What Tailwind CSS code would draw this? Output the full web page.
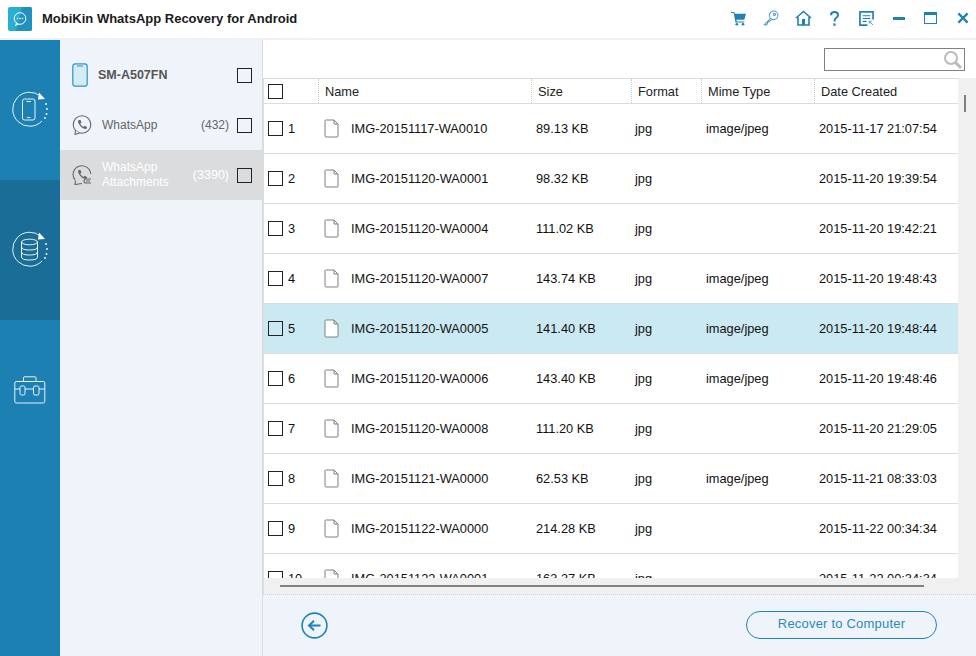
<!DOCTYPE html>
<html lang="en">
<head>
<meta charset="UTF-8">
<title>MobiKin WhatsApp Recovery for Android</title>
<script src="https://cdn.jsdelivr.net/npm/@tailwindcss/browser@4"></script>
</head>
<body class="w-[976px] h-[656px] overflow-hidden bg-white font-['Liberation_Sans',Arial,sans-serif] text-[12px] text-[#111]">
<svg class="hidden">
  <symbol id="file" viewBox="0 0 15 19"><path d="M1.5 1 H10 L14 5 V17 Q14 18 13 18 H2 Q1 18 1 17 V1.5 Z M10 1 V5 H14" fill="#fff" stroke="#808080" stroke-width="1"/></symbol>
</svg>

<!-- title bar -->
<header class="h-[40px] flex items-center border-b-2 border-[#f0f0f0] bg-white">
  <svg class="ml-[8px] w-[24px] h-[24px]" viewBox="0 0 24 24">
    <rect width="24" height="24" rx="2" fill="#29aed0"/>
    <path d="M14 0 H22 Q24 0 24 2 V22 Q24 24 22 24 H8 Z" fill="#2190bd"/>
    <circle cx="12" cy="11.5" r="5.8" fill="none" stroke="#fff" stroke-width="1"/>
    <path d="M8 16 L7 19 L11 17.2" fill="#fff"/>
    <circle cx="9.5" cy="11.5" r=".8" fill="#fff"/><circle cx="12" cy="11.5" r=".8" fill="#fff"/><circle cx="14.5" cy="11.5" r=".8" fill="#fff"/>
  </svg>
  <h1 class="ml-[10px] text-[13px] font-bold text-[#1a1a1a]">MobiKin WhatsApp Recovery for Android</h1>
  <div class="ml-auto mr-[7px] pb-[2px] flex items-center h-full">
    <svg class="w-[16px] h-[15px] mr-[16px]" viewBox="0 0 18 17" fill="#2082b3"><path d="M0 1 H3.5 L4.5 3 H17 L15 10 H6 L6.5 12 H15 V13 H5 L3 2.2 H0 Z"/><circle cx="6.5" cy="15" r="1.5"/><circle cx="13.5" cy="15" r="1.5"/></svg>
    <svg class="w-[16px] h-[16px] mr-[16px]" viewBox="0 0 18 18" fill="none" stroke="#4f9fc6" stroke-width="1.2"><circle cx="12" cy="6" r="4.8"/><circle cx="13" cy="5" r="1.2"/><path d="M8.5 9.5 L1.5 16.5 L3.5 17 L5 15.5 L5.5 13.5 L7 13 L10 10.5"/></svg>
    <svg class="w-[17px] h-[16px] mr-[18px]" viewBox="0 0 17 16" fill="none" stroke="#2082b3" stroke-width="1.6"><path d="M1 8 L8.5 1.5 L16 8"/><path d="M3 7 V15 H14 V7"/><rect x="7" y="9" width="3" height="6" fill="#2082b3" stroke="none"/></svg>
    <svg class="w-[9px] h-[15px] mr-[20px]" viewBox="0 0 9 15" fill="none" stroke="#2082b3" stroke-width="2"><path d="M1 4.2 Q1 1 4.5 1 Q8 1 8 4 Q8 5.8 6 7 Q4.5 8 4.5 10.5"/><rect x="3.4" y="12.4" width="2.2" height="2.4" fill="#2082b3" stroke="none"/></svg>
    <svg class="w-[15px] h-[15px] mr-[19px]" viewBox="0 0 16 16" fill="none" stroke="#2082b3"><path d="M15 9 V1 H1 V15 H9" stroke-width="1.8"/><path d="M4 5 H12 M4 8 H12 M4 11 H8" stroke-width="1.2"/><path d="M11 11 L15 15 M11 11 H13.5 M11 11 V13.5" stroke-width="1" stroke="#4f9fc6"/></svg>
    <div class="w-[12px] h-[3px] mr-[19px] bg-[#2082b3]"></div>
    <div class="w-[13px] h-[12px] mr-[20px] border border-[#2082b3] border-t-[3px]"></div>
    <svg class="w-[12px] h-[12px]" viewBox="0 0 13 13" stroke="#2082b3" stroke-width="2.4"><path d="M1.5 1.5 L11.5 11.5 M11.5 1.5 L1.5 11.5"/></svg>
  </div>
</header>

<div class="flex h-[616px]">
  <!-- icon rail -->
  <nav class="w-[60px] shrink-0 bg-[#1c80b2] flex flex-col">
    <div class="h-[140px] flex pt-[51px] justify-center">
      <svg class="w-[36px] h-[36px]" viewBox="0 0 36 36" fill="none" stroke="#fff">
        <path d="M29 5.5 A17 17 0 1 0 30 30" stroke-width=".9"/>
        <path d="M27 1.5 L33 8 L26 8.5 Z" fill="#fff" stroke="none"/>
        <circle cx="34" cy="13" r=".9" fill="#fff" stroke="none"/><circle cx="35" cy="18" r=".9" fill="#fff" stroke="none"/><circle cx="34.5" cy="23" r=".9" fill="#fff" stroke="none"/><circle cx="33" cy="27" r=".9" fill="#fff" stroke="none"/>
        <rect x="10.5" y="8" width="12.5" height="21" rx="2" stroke-width=".9"/>
        <path d="M14.5 10.5 H19 M15 26.5 H18.5" stroke-width=".9"/>
      </svg>
    </div>
    <div class="h-[140px] bg-[#1a6d97] flex pt-[51px] justify-center">
      <svg class="w-[36px] h-[36px]" viewBox="0 0 36 36" fill="none" stroke="#fff">
        <path d="M29 5.5 A17 17 0 1 0 30 30" stroke-width=".9"/>
        <path d="M27 1.5 L33 8 L26 8.5 Z" fill="#fff" stroke="none"/>
        <circle cx="34" cy="13" r=".9" fill="#fff" stroke="none"/><circle cx="35" cy="18" r=".9" fill="#fff" stroke="none"/><circle cx="34.5" cy="23" r=".9" fill="#fff" stroke="none"/><circle cx="33" cy="27" r=".9" fill="#fff" stroke="none"/>
        <ellipse cx="17.5" cy="11" rx="8" ry="2.8" stroke-width=".9"/>
        <path d="M9.5 11 V26 Q9.5 29 17.5 29 Q25.5 29 25.5 26 V11 M9.5 16 Q9.5 19 17.5 19 Q25.5 19 25.5 16 M9.5 21 Q9.5 24 17.5 24 Q25.5 24 25.5 21" stroke-width=".9"/>
      </svg>
    </div>
    <div class="flex pt-[56px] justify-center">
      <svg class="w-[32px] h-[28px]" viewBox="0 0 32 28" fill="none" stroke="#fff" stroke-width=".9">
        <rect x=".8" y="5.5" width="30" height="21.5" rx="1.5"/>
        <path d="M9.5 5.5 V1.8 Q9.5 .8 10.5 .8 H21 Q22 .8 22 1.8 V5.5"/>
        <path d="M.8 13 H6 M11 13 H19.5 M25 13 H30.8"/>
        <rect x="6" y="10" width="5" height="9" rx="1.5"/><rect x="19.5" y="10" width="5.5" height="9" rx="1.5"/>
      </svg>
    </div>
  </nav>

  <!-- device tree -->
  <aside class="w-[203px] shrink-0 bg-[#eff4fb] border-r border-[#dcdcdc]">
    <div class="h-[60px] flex items-center pl-[12px] pt-[10px]">
      <svg class="w-[16px] h-[24px]" viewBox="0 0 16 24"><rect x=".8" y=".8" width="14.4" height="22.4" rx="2.5" fill="#d3ecf7" stroke="#2f95c4" stroke-width="1.2"/><path d="M5 3 H11" stroke="#2f95c4"/></svg>
      <span class="ml-[10px] text-[12.5px] font-bold text-[#555]">SM-A507FN</span>
      <span class="ml-auto mr-[10px] w-[15px] h-[15px] border border-[#222]"></span>
    </div>
    <div class="h-[50px] flex items-center pl-[12px]">
      <svg class="w-[20px] h-[20px]" viewBox="0 0 20 20" fill="none" stroke="#666" stroke-width="1.1"><circle cx="10" cy="9.5" r="8.8"/><path d="M3.5 15.5 L3 19.5 L7.5 18" fill="#eff4fb"/><path d="M6.5 5 L8.5 5 L9.5 7.5 L8.2 8.8 Q9.5 11 11.5 12 L12.8 10.8 L15 12 L14.5 14 Q9 14.5 6 7 Z" fill="#666" stroke="none"/></svg>
      <span class="ml-[10px] text-[#666]">WhatsApp</span>
      <span class="ml-auto mr-[8px] text-[#666]">(432)</span>
      <span class="mr-[10px] w-[15px] h-[15px] border border-[#222]"></span>
    </div>
    <div class="h-[50px] flex items-center pl-[12px] bg-[#dbdcdd]">
      <svg class="w-[20px] h-[20px]" viewBox="0 0 20 20" fill="none" stroke="#666" stroke-width="1.1"><path d="M3 15 A8.8 8.8 0 1 1 18.7 9"/><path d="M3.5 15.5 L3 19.5 L10 18.5"/><path d="M6.5 5 L8.5 5 L9.5 7.5 L8.2 8.8 Q9.5 11 11.5 12 L12.8 10.8 L15 12 L14.5 14 Q9 14.5 6 7 Z" fill="#666" stroke="none"/><path d="M19 14 H14 A2 2 0 0 0 14 18 H19 M18 16 H14" /></svg>
      <span class="ml-[10px] text-white leading-[15px]">WhatsApp<br>Attachments</span>
      <span class="ml-auto mr-[8px] text-[12.5px] text-white">(3390)</span>
      <span class="mr-[10px] w-[15px] h-[15px] border border-[#222]"></span>
    </div>
  </aside>

  <!-- file list -->
  <main class="flex-1 min-w-0 flex flex-col bg-white text-[12.8px]">
    <div class="h-[38px] shrink-0 flex items-start justify-end pr-[11px] pt-[8px]">
      <div class="relative w-[141px] h-[23px] border border-[#808080]">
        <svg class="absolute right-[1px] top-[1px] w-[20px] h-[20px]" viewBox="0 0 20 20" fill="none" stroke="#bdb9b9"><circle cx="8" cy="8" r="6" stroke-width="2"/><path d="M12.5 12.5 L18 18" stroke-width="3"/></svg>
      </div>
    </div>

    <div class="h-[500px] shrink-0 flex border-l border-[#dcdcdc]">
      <div class="flex-1 min-w-0 flex flex-col overflow-hidden">
        <!-- columns -->
        <div class="h-[26px] shrink-0 flex items-center border-y border-[#dcdcdc] text-[#222]">
          <div class="w-[55px] h-full pl-[4px] flex items-center border-r border-dotted border-[#ccc]"><span class="w-[15px] h-[15px] border border-[#222]"></span></div>
          <div class="w-[213px] h-full pl-[6px] pt-[1px] flex items-center border-r border-dotted border-[#ccc]">Name</div>
          <div class="w-[100px] h-full pl-[6px] pt-[1px] flex items-center border-r border-dotted border-[#ccc]">Size</div>
          <div class="w-[70px] h-full pl-[6px] pt-[1px] flex items-center border-r border-dotted border-[#ccc]">Format</div>
          <div class="w-[113px] h-full pl-[6px] pt-[1px] flex items-center border-r border-dotted border-[#ccc]">Mime Type</div>
          <div class="pl-[6px] pt-[1px]">Date Created</div>
        </div>
        <!-- rows -->
        <div class="h-[50px] shrink-0 flex items-center border-b border-[#dcdcdc]">
          <div class="w-[55px] pl-[4px] flex items-center"><span class="w-[15px] h-[15px] border border-[#222]"></span><span class="ml-[5px]">1</span></div>
          <div class="w-[213px] pl-[5px] flex items-center"><svg class="w-[15px] h-[19px]"><use href="#file"/></svg><span class="ml-[12px]">IMG-20151117-WA0010</span></div>
          <div class="w-[100px] pl-[4px]">89.13 KB</div><div class="w-[70px] pl-[3px]">jpg</div><div class="w-[113px] pl-[4px]">image/jpeg</div><div class="pl-[4px]">2015-11-17 21:07:54</div>
        </div>
        <div class="h-[50px] shrink-0 flex items-center border-b border-[#dcdcdc]">
          <div class="w-[55px] pl-[4px] flex items-center"><span class="w-[15px] h-[15px] border border-[#222]"></span><span class="ml-[5px]">2</span></div>
          <div class="w-[213px] pl-[5px] flex items-center"><svg class="w-[15px] h-[19px]"><use href="#file"/></svg><span class="ml-[12px]">IMG-20151120-WA0001</span></div>
          <div class="w-[100px] pl-[4px]">98.32 KB</div><div class="w-[70px] pl-[3px]">jpg</div><div class="w-[113px] pl-[4px]"></div><div class="pl-[4px]">2015-11-20 19:39:54</div>
        </div>
        <div class="h-[50px] shrink-0 flex items-center border-b border-[#dcdcdc]">
          <div class="w-[55px] pl-[4px] flex items-center"><span class="w-[15px] h-[15px] border border-[#222]"></span><span class="ml-[5px]">3</span></div>
          <div class="w-[213px] pl-[5px] flex items-center"><svg class="w-[15px] h-[19px]"><use href="#file"/></svg><span class="ml-[12px]">IMG-20151120-WA0004</span></div>
          <div class="w-[100px] pl-[4px]">111.02 KB</div><div class="w-[70px] pl-[3px]">jpg</div><div class="w-[113px] pl-[4px]"></div><div class="pl-[4px]">2015-11-20 19:42:21</div>
        </div>
        <div class="h-[50px] shrink-0 flex items-center border-b border-[#dcdcdc]">
          <div class="w-[55px] pl-[4px] flex items-center"><span class="w-[15px] h-[15px] border border-[#222]"></span><span class="ml-[5px]">4</span></div>
          <div class="w-[213px] pl-[5px] flex items-center"><svg class="w-[15px] h-[19px]"><use href="#file"/></svg><span class="ml-[12px]">IMG-20151120-WA0007</span></div>
          <div class="w-[100px] pl-[4px]">143.74 KB</div><div class="w-[70px] pl-[3px]">jpg</div><div class="w-[113px] pl-[4px]">image/jpeg</div><div class="pl-[4px]">2015-11-20 19:48:43</div>
        </div>
        <div class="h-[50px] shrink-0 flex items-center border-b border-[#dcdcdc] bg-[#cbe9f2]">
          <div class="w-[55px] pl-[4px] flex items-center"><span class="w-[15px] h-[15px] border border-[#222]"></span><span class="ml-[5px]">5</span></div>
          <div class="w-[213px] pl-[5px] flex items-center"><svg class="w-[15px] h-[19px]"><use href="#file"/></svg><span class="ml-[12px]">IMG-20151120-WA0005</span></div>
          <div class="w-[100px] pl-[4px]">141.40 KB</div><div class="w-[70px] pl-[3px]">jpg</div><div class="w-[113px] pl-[4px]">image/jpeg</div><div class="pl-[4px]">2015-11-20 19:48:44</div>
        </div>
        <div class="h-[50px] shrink-0 flex items-center border-b border-[#dcdcdc]">
          <div class="w-[55px] pl-[4px] flex items-center"><span class="w-[15px] h-[15px] border border-[#222]"></span><span class="ml-[5px]">6</span></div>
          <div class="w-[213px] pl-[5px] flex items-center"><svg class="w-[15px] h-[19px]"><use href="#file"/></svg><span class="ml-[12px]">IMG-20151120-WA0006</span></div>
          <div class="w-[100px] pl-[4px]">143.40 KB</div><div class="w-[70px] pl-[3px]">jpg</div><div class="w-[113px] pl-[4px]">image/jpeg</div><div class="pl-[4px]">2015-11-20 19:48:46</div>
        </div>
        <div class="h-[50px] shrink-0 flex items-center border-b border-[#dcdcdc]">
          <div class="w-[55px] pl-[4px] flex items-center"><span class="w-[15px] h-[15px] border border-[#222]"></span><span class="ml-[5px]">7</span></div>
          <div class="w-[213px] pl-[5px] flex items-center"><svg class="w-[15px] h-[19px]"><use href="#file"/></svg><span class="ml-[12px]">IMG-20151120-WA0008</span></div>
          <div class="w-[100px] pl-[4px]">111.20 KB</div><div class="w-[70px] pl-[3px]">jpg</div><div class="w-[113px] pl-[4px]"></div><div class="pl-[4px]">2015-11-20 21:29:05</div>
        </div>
        <div class="h-[50px] shrink-0 flex items-center border-b border-[#dcdcdc]">
          <div class="w-[55px] pl-[4px] flex items-center"><span class="w-[15px] h-[15px] border border-[#222]"></span><span class="ml-[5px]">8</span></div>
          <div class="w-[213px] pl-[5px] flex items-center"><svg class="w-[15px] h-[19px]"><use href="#file"/></svg><span class="ml-[12px]">IMG-20151121-WA0000</span></div>
          <div class="w-[100px] pl-[4px]">62.53 KB</div><div class="w-[70px] pl-[3px]">jpg</div><div class="w-[113px] pl-[4px]">image/jpeg</div><div class="pl-[4px]">2015-11-21 08:33:03</div>
        </div>
        <div class="h-[50px] shrink-0 flex items-center border-b border-[#dcdcdc]">
          <div class="w-[55px] pl-[4px] flex items-center"><span class="w-[15px] h-[15px] border border-[#222]"></span><span class="ml-[5px]">9</span></div>
          <div class="w-[213px] pl-[5px] flex items-center"><svg class="w-[15px] h-[19px]"><use href="#file"/></svg><span class="ml-[12px]">IMG-20151122-WA0000</span></div>
          <div class="w-[100px] pl-[4px]">214.28 KB</div><div class="w-[70px] pl-[3px]">jpg</div><div class="w-[113px] pl-[4px]"></div><div class="pl-[4px]">2015-11-22 00:34:34</div>
        </div>
        <div class="h-[50px] shrink-0 flex items-center border-b border-[#dcdcdc]">
          <div class="w-[55px] pl-[4px] flex items-center"><span class="w-[15px] h-[15px] border border-[#222]"></span><span class="ml-[5px]">10</span></div>
          <div class="w-[213px] pl-[5px] flex items-center"><svg class="w-[15px] h-[19px]"><use href="#file"/></svg><span class="ml-[12px]">IMG-20151122-WA0001</span></div>
          <div class="w-[100px] pl-[4px]">163.37 KB</div><div class="w-[70px] pl-[3px]">jpg</div><div class="w-[113px] pl-[4px]"></div><div class="pl-[4px]">2015-11-22 00:34:34</div>
        </div>
      </div>
      <!-- vertical scrollbar -->
      <div class="w-[18px] shrink-0 bg-[#f0f0f0] pl-[6px] pt-[17px]"><div class="w-[2px] h-[17px] bg-[#808080]"></div></div>
    </div>

    <!-- horizontal scrollbar -->
    <div class="h-[16px] shrink-0 bg-[#f0f0f0] border-l border-[#dcdcdc] pl-[16px] pt-[7px]"><div class="w-[644px] h-[2px] bg-[#808080]"></div></div>

    <footer class="flex-1 flex items-center justify-between bg-[#eff4fb] border-t border-dotted border-[#d0d0d0] pl-[38px] pr-[39px] pb-[1px]">
      <svg class="w-[27px] h-[27px]" viewBox="0 0 27 27" fill="none" stroke="#2083b4"><circle cx="13.5" cy="13.5" r="12.4" stroke-width="1.6"/><path d="M19.5 13.5 H8.5" stroke-width="2"/><path d="M13 8.8 L8 13.5 L13 18.2" stroke-width="2"/></svg>
      <button class="w-[191px] h-[28px] pb-[3px] rounded-full border border-[#2083b4] text-[13px] tracking-[0.2px] text-[#2a8ab9]">Recover to Computer</button>
    </footer>
  </main>
</div>
</body>
</html>
